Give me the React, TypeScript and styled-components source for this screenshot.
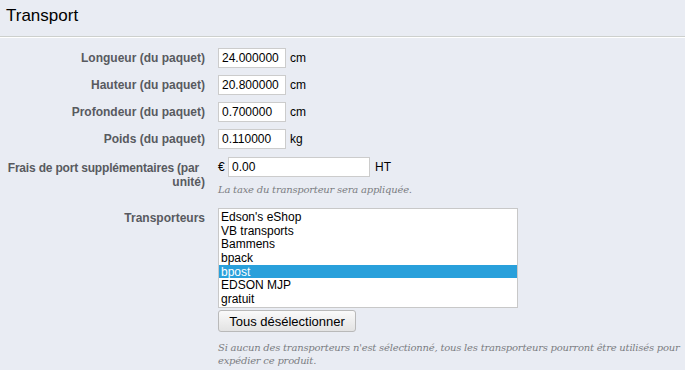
import React from "react";
import styled, { createGlobalStyle } from "styled-components";

const GlobalStyle = createGlobalStyle`
  html, body {
    margin: 0;
    padding: 0;
    background: #e9ecf3;
  }
  body {
    font-family: "Liberation Sans", Arial, sans-serif;
    color: #000;
  }
`;

interface Dimension {
  label: string;
  value: string;
  unit: string;
}

const dimensions: Dimension[] = [
  { label: "Longueur (du paquet)", value: "24.000000", unit: "cm" },
  { label: "Hauteur (du paquet)", value: "20.800000", unit: "cm" },
  { label: "Profondeur (du paquet)", value: "0.700000", unit: "cm" },
  { label: "Poids (du paquet)", value: "0.110000", unit: "kg" },
];

const carriers = [
  "Edson's eShop",
  "VB transports",
  "Bammens",
  "bpack",
  "bpost",
  "EDSON MJP",
  "gratuit",
];

const App: React.FC = () => {
  return (
    <Page>
      <GlobalStyle />
      <Title>Transport</Title>
      <Form>
        {dimensions.map((d) => (
          <Row key={d.label}>
            <Label>{d.label}</Label>
            <Field>
              <SmallInput defaultValue={d.value} />
              <Unit>{d.unit}</Unit>
            </Field>
          </Row>
        ))}

        <Row $top={1} $gap={12}>
          <Label $top={4}>
            <FirstLine>Frais de port supplémentaires (par</FirstLine>
            <br />
            unité)
          </Label>
          <Stack>
            <Field>
              <Currency>€</Currency>
              <WideInput defaultValue="0.00" />
              <Unit $left={5}>HT</Unit>
            </Field>
            <Hint>La taxe du transporteur sera appliquée.</Hint>
          </Stack>
        </Row>

        <Row>
          <Label>Transporteurs</Label>
          <Stack>
            <ListBox>
              {carriers.map((c) => (
                <Option key={c} $selected={c === "bpost"}>
                  {c}
                </Option>
              ))}
            </ListBox>
            <Button type="button">Tous désélectionner</Button>
            <Hint $top={9}>
              Si aucun des transporteurs n'est sélectionné, tous les transporteurs pourront être utilisés pour
              <br />
              expédier ce produit.
            </Hint>
          </Stack>
        </Row>
      </Form>
    </Page>
  );
};

const Page = styled.div`
  width: 685px;
  height: 370px;
  overflow: hidden;
`;

const Title = styled.h2`
  margin: 0;
  padding: 5px 0 0 6px;
  height: 37px;
  box-sizing: border-box;
  font-size: 17px;
  font-weight: normal;
  line-height: 22px;
  color: #000;
  border-bottom: 1px solid #cdd0cd;
  box-shadow: 0 1px 0 #fff;
`;

const Form = styled.div`
  display: flex;
  flex-direction: column;
  padding-top: 11px;
`;

const Row = styled.div<{ $gap?: number; $top?: number }>`
  display: flex;
  align-items: flex-start;
  margin-top: ${(p) => p.$top ?? 0}px;
  margin-bottom: ${(p) => p.$gap ?? 7}px;
`;

const Label = styled.label<{ $top?: number }>`
  width: 205px;
  flex-shrink: 0;
  text-align: right;
  font-size: 12px;
  font-weight: bold;
  color: #585a5f;
  line-height: 14px;
  padding-top: ${(p) => p.$top ?? 3}px;
  box-sizing: border-box;
  margin-right: 13px;
  white-space: nowrap;
`;

const FirstLine = styled.span`
  padding-right: 6px;
  letter-spacing: -0.18px;
`;

const Field = styled.div`
  display: flex;
  align-items: center;
  height: 20px;
`;

const Stack = styled.div`
  display: flex;
  flex-direction: column;
`;

const SmallInput = styled.input`
  width: 68px;
  height: 20px;
  box-sizing: border-box;
  border: 1px solid #ccc;
  background: #fff;
  padding: 0 3px;
  font-family: "Liberation Sans", Arial, sans-serif;
  font-size: 12px;
  color: #000;
  outline: none;
`;

const WideInput = styled(SmallInput)`
  width: 142px;
`;

const Unit = styled.span<{ $left?: number }>`
  margin-left: ${(p) => p.$left ?? 4}px;
  font-size: 12px;
  color: #000;
`;

const Currency = styled.span`
  width: 10px;
  font-size: 12px;
  color: #000;
`;

const Hint = styled.p<{ $top?: number }>`
  margin: ${(p) => p.$top ?? 6}px 0 0 0;
  font-family: "DejaVu Serif", Georgia, serif;
  font-style: italic;
  font-size: 10px;
  letter-spacing: -0.22px;
  line-height: 13px;
  white-space: nowrap;
  color: #7b7d82;
`;

const ListBox = styled.div`
  width: 300px;
  height: 100px;
  box-sizing: border-box;
  border: 1px solid #c8c8c8;
  background: #fff;
  padding-top: 1px;
  overflow: hidden;
`;

const Option = styled.div<{ $selected?: boolean }>`
  height: 13.7px;
  line-height: 14px;
  padding-left: 2px;
  font-size: 12px;
  color: ${(p) => (p.$selected ? "#fff" : "#000")};
  background: ${(p) => (p.$selected ? "#29a0db" : "transparent")};
`;

const Button = styled.button`
  align-self: flex-start;
  margin-top: 2px;
  width: 138px;
  height: 22px;
  padding: 0;
  border: 1px solid #b9b9b9;
  border-radius: 3px;
  background: linear-gradient(#fafafa, #e3e3e3);
  font-family: "Liberation Sans", Arial, sans-serif;
  font-size: 13px;
  color: #000;
`;

export default App;
